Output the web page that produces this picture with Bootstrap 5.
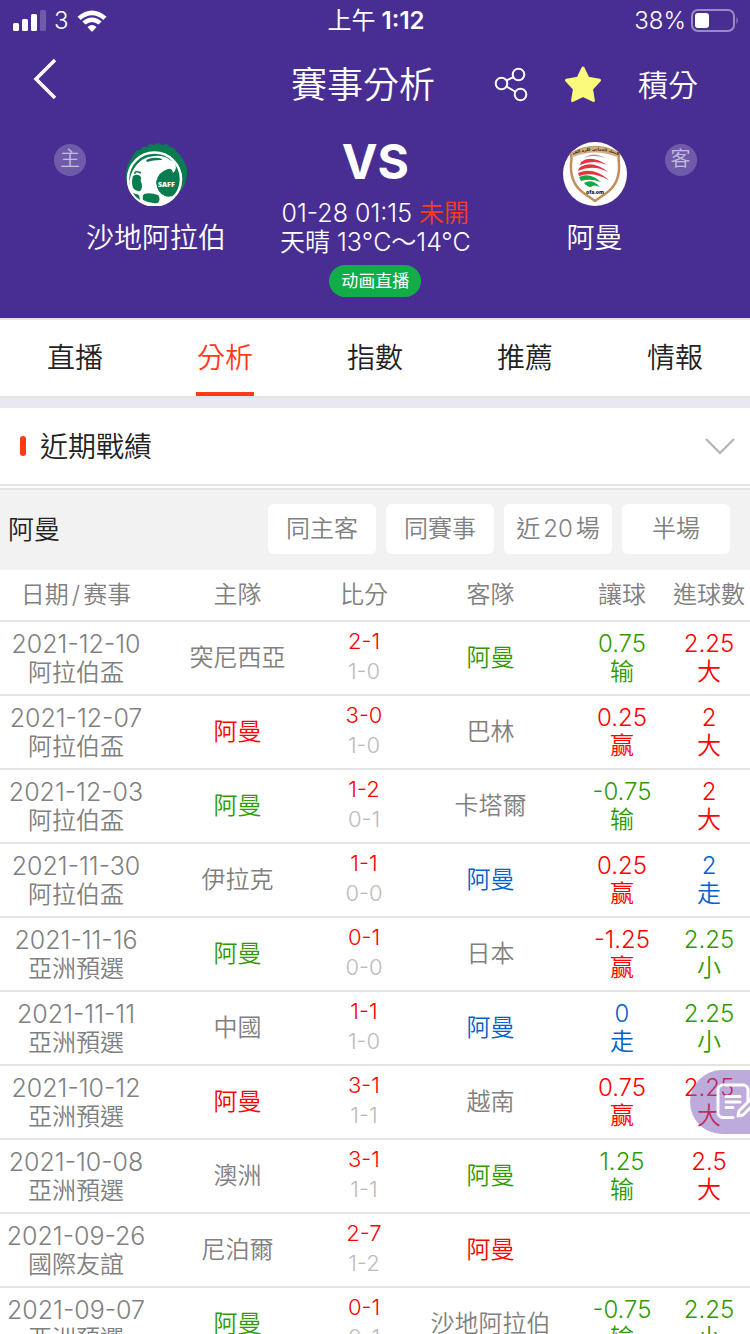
<!DOCTYPE html>
<html lang="zh-Hant">
<head>
<meta charset="utf-8">
<meta name="viewport" content="width=device-width, initial-scale=1">
<title>賽事分析</title>
<link href="https://cdn.jsdelivr.net/npm/bootstrap@5.3.0/dist/css/bootstrap.min.css" rel="stylesheet">
<style>
  :root {
    --purple: #482e92;
    --accent: #ff3b17;
    --rule: #e4e4e4;
    --grey: #808080;
  }
  body {
    font-family: Inter, "Noto Sans CJK TC", sans-serif;
    font-size: 24px;
    line-height: 28px;
    color: #222;
    background: #fff;
  }
  svg { display: block; flex: none; }
  .thin { font-weight: 350; }
  .side { flex: 1 1 0; }
  .top-area { background: var(--purple); }
  .status-bar { height: 42px; padding: 0 10px 0 12px; }
  .title-bar { height: 86px; }
  .title-bar h1 { font-size: 36px; line-height: 44px; }
  .title-actions { gap: 36px; }
  .points { margin-right: 52px; font-size: 30px; line-height: 36px; }
  .match-up { height: 190px; }
  .club-side { padding: 14px 54px 0; }
  .club { width: 140px; }
  .role-chip {
    width: 32px; height: 32px; margin-top: 2px; font-size: 20px; line-height: 30px;
    background: rgba(255,255,255,.22); color: rgba(255,255,255,.6);
  }
  .team-name { margin-top: 14px; font-size: 28px; line-height: 36px; white-space: nowrap; }
  .versus { margin: 6px 0 9px; font-size: 48px; line-height: 56px; }
  .kick-off { font-size: 25px; line-height: 29px; white-space: nowrap; }
  .unstarted { color: var(--accent); }
  .live-pill {
    height: 32px; padding: 0 12px; border: 0; background: #12ad49; color: #fff;
    font-size: 17px; line-height: 32px;
    font-family: Inter, "Noto Sans CJK SC", sans-serif;
  }
  .tab-strip { height: 80px; border-top: 2px solid var(--rule); border-bottom: 2px solid var(--rule); }
  .tab-strip a { font-size: 28px; line-height: 76px; color: #222; }
  .tab-strip a span { display: inline-block; padding: 0 1px; height: 76px; }
  .tab-strip a.active { color: var(--accent); }
  .tab-strip a.active span { box-shadow: inset 0 -4px var(--accent); }
  .gap-band { height: 10px; background: #e9e7f2; }
  .scroll-area { overflow-y: auto; scrollbar-width: none; }
  .scroll-area::-webkit-scrollbar { display: none; }
  .section-head { height: 78px; padding: 0 14px 0 20px; border-bottom: 2px solid var(--rule); }
  .section-head h2 { margin: 2px 0 0 14px; font-size: 28px; line-height: 36px; }
  .marker { width: 6px; height: 20px; border-radius: 3px; background: var(--accent); }
  .filter-bar { height: 82px; margin-top: 2px; padding: 14px 20px 0 8px; border-top: 2px solid var(--rule); background: #f2f2f2; gap: 10px; }
  .filter-bar h3 { font-size: 26px; line-height: 52px; }
  .filter-bar button { width: 108px; height: 50px; border: 0; border-radius: 6px; background: #fff; color: var(--grey); }
  .spaced { padding: 0 3px; }
  .records { table-layout: fixed; border-collapse: separate; border-spacing: 0; text-align: center; color: var(--grey); }
  .records th, .records td { padding: 0; border-bottom: 2px solid var(--rule); vertical-align: middle; white-space: nowrap; font-weight: 350; }
  .records th { height: 52px; }
  .records td { height: 74px; }
  .w-date { width: 152px; } .w-score { width: 82px; } .w-line { width: 92px; }
  .day { font-size: 25px; }
  .records .score { padding-bottom: 4px; font-size: 22px; line-height: 30px; }
  .records .half-score { color: #bbb; }
  .hot { color: #f00; }
  .win { color: #309b00; }
  .draw { color: #0062cc; }
  .sc { font-family: Inter, "Noto Sans CJK SC", sans-serif; }
  .note-button {
    position: fixed; right: 0; top: 1070px; width: 60px; height: 64px; padding: 0; border: 0;
    border-radius: 32px 0 0 32px; background: rgba(124,88,184,.5); overflow: hidden;
  }
</style>
</head>
<body>
<div class="vh-100 d-flex flex-column">
  <header class="top-area text-white flex-shrink-0">
    <div class="status-bar d-flex align-items-center">
      <div class="side d-flex align-items-center">
        <svg width="34" height="22" viewBox="0 0 34 22" fill="#fff"><rect x="1" y="13" width="6" height="8" rx="1.5"/><rect x="10" y="9" width="6" height="12" rx="1.5"/><rect x="19" y="4" width="6" height="17" rx="1.5"/><rect x="28" width="6" height="21" rx="1.5" opacity=".22"/></svg>
        <span class="thin mx-2">3</span>
        <svg width="30" height="23" viewBox="0 0 30 23" fill="#fff"><path d="M.5 6.700Q15-5.600 29.500 6.700L26.300 9.900Q15 .700 3.700 9.900ZM5.300 11.500Q15 3.300 24.700 11.500L21.500 14.600Q15 9.300 8.500 14.600ZM10.500 17Q15 13 19.500 17L16 21Q15 22 14 21Z"/></svg>
      </div>
      <div class="fw-semibold"><span class="fw-normal">上午</span> 1:12</div>
      <div class="side d-flex align-items-center justify-content-end">
        <span class="thin me-1">38%</span>
        <svg width="50" height="24" viewBox="0 0 50 24"><rect x="2" y="1" width="42" height="21" rx="6" fill="none" stroke="#fff" stroke-opacity=".45" stroke-width="2"/><rect x="5" y="4" width="14" height="15" rx="3" fill="#fff"/><path d="M46.500 8Q49 11.500 46.500 15Z" fill="#fff" opacity=".45"/></svg>
      </div>
    </div>

    <div class="title-bar d-flex align-items-center">
      <div class="side">
        <button class="btn p-0 border-0 ms-4 mb-3" aria-label="返回"><svg width="40" height="44" viewBox="0 0 40 44" fill="none" stroke="#fff" stroke-width="3.500"><path d="M31 5 12 24 31 43"/></svg></button>
      </div>
      <h1 class="thin my-0 ms-0 me-4">賽事分析</h1>
      <div class="side title-actions d-flex align-items-center justify-content-end">
        <button class="btn p-0 border-0" aria-label="分享"><svg width="34" height="36" viewBox="0 0 34 36" fill="none" stroke="#fff" stroke-width="2"><circle cx="7.500" cy="16.500" r="5.800"/><circle cx="24.500" cy="7.500" r="5.800"/><circle cx="26.500" cy="27.500" r="5.800"/><path d="m12.500 13.500 7-3.500M12.500 19.500 21 24.500"/></svg></button>
        <button class="btn p-0 border-0" aria-label="收藏"><svg width="38" height="38" viewBox="0 0 38 38" fill="#fbfa7c" stroke="#fbfa7c" stroke-width="3" stroke-linejoin="round"><path d="m19 2 5 10.300 11.500 2-8 8.600L29.400 34.500 19 29.300 8.600 34.500l1.900-11.600-8-8.600 11.500-2Z"/></svg></button>
        <a href="#" class="points thin text-white text-decoration-none">積分</a>
      </div>
    </div>

    <div class="match-up d-flex">
      <div class="side club-side d-flex">
        <span class="role-chip rounded-circle text-center thin flex-shrink-0">主</span>
        <div class="club flex-shrink-0 d-flex flex-column align-items-center">
          <svg width="64" height="64" viewBox="0 0 64 64">
            <path d="M10 12 13 8 17 8 18 5 23 5 26 2 30 3 34 1 38 3 43 2 46 5 50 6 52 9 56 13 60 19 63 27 63 34 60 45 50 56 40 61 23 62 8 50 2 38 2 30 4 22Z" fill="#0b7c50"/>
            <circle cx="30.500" cy="37" r="26.500" fill="#0b7c50" stroke="#fff" stroke-width="2.500"/>
            <path d="M9 28Q16 15 30 14 40 13 46 18 52 20 52 26 51 30 49 31 48 26 44 27 34 30 32 40 33 51 41 54 45 56 51 53 43 63 30 63 16 62 7 49 3 39 9 28Z" fill="#fff"/>
            <path d="M22 18Q30 14 38 17 39 18 36 18 29 18 23 20ZM9 34Q14 31 17 35 16 39 18 43 18 48 16 49 12 50 9 46 7 40 9 34ZM20 52Q26 50 34 53 37 57 34 61 26 62 19 58 18 54 20 52ZM9 51 15 53 16 58Q11 55 9 51Z" fill="#0b7c50"/>
            <path d="M17 31Q10 28 11 32" stroke="#0b7c50" fill="none" stroke-width="1.500"/>
            <text x="34" y="45" font-family="Open Sans" font-size="7" font-weight="800" fill="#fff">SAFF</text>
          </svg>
          <div class="team-name thin">沙地阿拉伯</div>
        </div>
      </div>
      <div class="text-center">
        <div class="versus fw-bold">VS</div>
        <div class="kick-off thin">01-28 01:15 <span class="unstarted">未開</span></div>
        <div class="kick-off thin">天晴 13°C～14°C</div>
        <button class="live-pill rounded-pill mt-2">动画直播</button>
      </div>
      <div class="side club-side d-flex justify-content-end">
        <div class="club flex-shrink-0 d-flex flex-column align-items-center">
          <svg width="64" height="64" viewBox="0 0 64 64">
            <circle cx="32" cy="32" r="32" fill="#fff"/>
            <path d="M8 12Q32-2 56 12L55.500 17Q59 41 42 52L32 59 22 52Q5 41 8.500 17Z" fill="#fff" stroke="#c08d5c" stroke-width="2.500"/>
            <path d="M8 11Q32-2 56 11L54 15Q32 6 10 15Z" fill="#d5ae7d"/>
            <path id="crest-arc" d="M9 13Q32 4 55 13" fill="none"/>
            <text text-anchor="middle" font-family="DejaVu Sans" font-size="4" font-weight="700" fill="#272018"><textPath href="#crest-arc" startOffset="50%">الاتحاد العماني لكرة القدم</textPath></text>
            <path d="M21 16Q30 9 42 16 30 12 21 16Z" fill="#9c9c9c"/>
            <path d="M18 20Q28 12 44 23 31 17 17 23ZM16 26Q29 17 45 30 30 22 15 29ZM15 31Q30 24 46 38 29 29 16 34Z" fill="#e63342"/>
            <path d="M16 35Q27 30 38 40 27 36 18 39ZM21 41Q29 36 37 45 30 42 28 45 24 45 21 41Z" fill="#18a448"/>
            <text x="32" y="52" text-anchor="middle" font-family="Open Sans" font-size="5" font-weight="800" fill="#222">ofa.om</text>
          </svg>
          <div class="team-name thin">阿曼</div>
        </div>
        <span class="role-chip rounded-circle text-center thin flex-shrink-0">客</span>
      </div>
    </div>
  </header>

  <nav class="tab-strip d-flex text-center flex-shrink-0">
    <a href="#" class="side thin text-decoration-none"><span>直播</span></a>
    <a href="#" class="side thin text-decoration-none active" aria-current="page"><span>分析</span></a>
    <a href="#" class="side thin text-decoration-none"><span>指數</span></a>
    <a href="#" class="side thin text-decoration-none"><span>推薦</span></a>
    <a href="#" class="side thin text-decoration-none"><span>情報</span></a>
  </nav>
  <div class="gap-band flex-shrink-0"></div>

  <main class="scroll-area flex-grow-1">
    <div class="section-head d-flex align-items-center">
      <span class="marker"></span>
      <h2 class="thin">近期戰績</h2>
      <button class="btn p-0 border-0 ms-auto" aria-label="收起"><svg width="32" height="20" viewBox="0 0 32 20" fill="none" stroke="#b2b2b2" stroke-width="2"><path d="m2 3 14 14L30 3"/></svg></button>
    </div>
    <div class="filter-bar d-flex align-items-start">
      <h3 class="thin m-0 me-auto">阿曼</h3>
      <button class="thin p-0">同主客</button>
      <button class="thin p-0">同賽事</button>
      <button class="thin p-0">近<span class="spaced">20</span>場</button>
      <button class="thin p-0">半場</button>
    </div>
    <table class="records w-100">
      <colgroup><col class="w-date"><col><col class="w-score"><col><col class="w-line"><col class="w-score"></colgroup>
      <thead>
        <tr><th>日期<span class="spaced">/</span><span class="sc">赛</span>事</th><th>主隊</th><th>比分</th><th>客隊</th><th>讓球</th><th>進球數</th></tr>
      </thead>
      <tbody>
        <tr><td><span class="day">2021-12-10</span><br>阿拉伯盃</td><td>突尼西亞</td><td class="score"><span class="hot">2-1</span><br><span class="half-score">1-0</span></td><td class="win">阿曼</td><td class="win">0.75<br><span class="sc">输</span></td><td class="hot">2.25<br>大</td></tr>
        <tr><td><span class="day">2021-12-07</span><br>阿拉伯盃</td><td class="hot">阿曼</td><td class="score"><span class="hot">3-0</span><br><span class="half-score">1-0</span></td><td>巴林</td><td class="hot">0.25<br><span class="sc">赢</span></td><td class="hot">2<br>大</td></tr>
        <tr><td><span class="day">2021-12-03</span><br>阿拉伯盃</td><td class="win">阿曼</td><td class="score"><span class="hot">1-2</span><br><span class="half-score">0-1</span></td><td>卡塔爾</td><td class="win">-0.75<br><span class="sc">输</span></td><td class="hot">2<br>大</td></tr>
        <tr><td><span class="day">2021-11-30</span><br>阿拉伯盃</td><td>伊拉克</td><td class="score"><span class="hot">1-1</span><br><span class="half-score">0-0</span></td><td class="draw">阿曼</td><td class="hot">0.25<br><span class="sc">赢</span></td><td class="draw">2<br>走</td></tr>
        <tr><td><span class="day">2021-11-16</span><br>亞洲預選</td><td class="win">阿曼</td><td class="score"><span class="hot">0-1</span><br><span class="half-score">0-0</span></td><td>日本</td><td class="hot">-1.25<br><span class="sc">赢</span></td><td class="win">2.25<br>小</td></tr>
        <tr><td><span class="day">2021-11-11</span><br>亞洲預選</td><td>中國</td><td class="score"><span class="hot">1-1</span><br><span class="half-score">1-0</span></td><td class="draw">阿曼</td><td class="draw">0<br>走</td><td class="win">2.25<br>小</td></tr>
        <tr><td><span class="day">2021-10-12</span><br>亞洲預選</td><td class="hot">阿曼</td><td class="score"><span class="hot">3-1</span><br><span class="half-score">1-1</span></td><td>越南</td><td class="hot">0.75<br><span class="sc">赢</span></td><td class="hot">2.25<br>大</td></tr>
        <tr><td><span class="day">2021-10-08</span><br>亞洲預選</td><td>澳洲</td><td class="score"><span class="hot">3-1</span><br><span class="half-score">1-1</span></td><td class="win">阿曼</td><td class="win">1.25<br><span class="sc">输</span></td><td class="hot">2.5<br>大</td></tr>
        <tr><td><span class="day">2021-09-26</span><br>國際友誼</td><td>尼泊爾</td><td class="score"><span class="hot">2-7</span><br><span class="half-score">1-2</span></td><td class="hot">阿曼</td><td></td><td></td></tr>
        <tr><td><span class="day">2021-09-07</span><br>亞洲預選</td><td class="win">阿曼</td><td class="score"><span class="hot">0-1</span><br><span class="half-score">0-1</span></td><td>沙地阿拉伯</td><td class="win">-0.75<br><span class="sc">输</span></td><td class="win">2.25<br>小</td></tr>
      </tbody>
    </table>
  </main>
</div>
<button class="note-button" aria-label="筆記">
  <svg width="60" height="64" viewBox="0 0 60 64" fill="none" stroke="#fff" stroke-width="3" stroke-linecap="round" stroke-linejoin="round"><path d="M43 47.500H33a5 5 0 0 1-5-5V20a5 5 0 0 1 5-5h20a5 5 0 0 1 5 5v11M36 26.500h14M36 32h14M36 37.500h7"/><path d="m48 46 1-5 11-11 4 4-11 11Z"/></svg>
</button>
<script src="https://cdn.jsdelivr.net/npm/bootstrap@5.3.0/dist/js/bootstrap.bundle.min.js"></script>
</body>
</html>
